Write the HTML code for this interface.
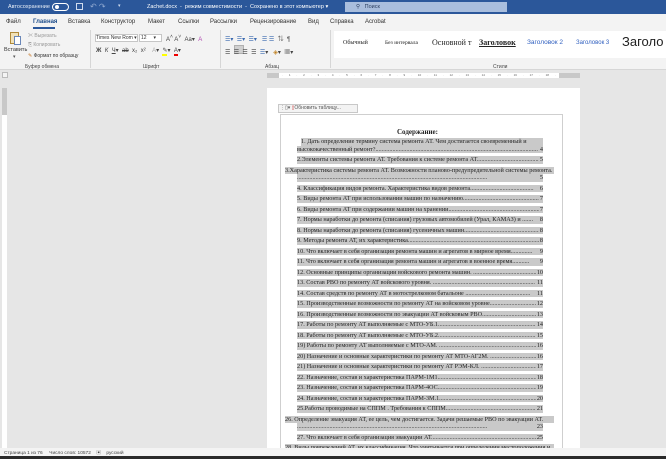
<!DOCTYPE html>
<html><head><meta charset="utf-8"><style>
*{margin:0;padding:0;box-sizing:border-box}
body{width:666px;height:459px;overflow:hidden;background:#e6e6e6;font-family:"Liberation Sans","Noto Sans CJK SC",sans-serif;position:relative}
.a{position:absolute;white-space:nowrap}
.t{font-size:6px}
.doc{font-family:"Liberation Serif",serif;font-size:6.2px;color:#222}
.ln{position:absolute;left:297px;width:246px;height:7.5px;background:#c9c9c9;line-height:7.5px;overflow:hidden;white-space:nowrap}
.ln span.n{position:absolute;right:0;top:0;background:#c9c9c9;padding-left:1px}
.w{left:285px;width:269px}
.rul{display:flex;justify-content:space-between;padding:0 3px}
</style></head><body>
<div class="a" style="left:0;top:0;width:666px;height:14px;background:#2b579a"></div>
<div class="a t" style="left:8px;top:4px;color:#e8eef7;font-size:5.5px">Автосохранение</div>
<div class="a" style="left:52px;top:3px;width:17px;height:8px;border:1px solid #fff;border-radius:4px"></div>
<div class="a" style="left:55px;top:5px;width:4px;height:4px;background:#fff;border-radius:2px"></div>
<div class="a" style="left:76px;top:3px;width:7px;height:7px;border:1px solid #cfdbee"></div>
<div class="a t" style="left:90px;top:2px;color:#8fa8d0;font-size:8px">↶ ↷</div>
<div class="a t" style="left:118px;top:3px;color:#cfdbee;font-size:5px">▾</div>
<div class="a t" style="left:147px;top:4px;color:#fff;font-size:5.5px">Zachet.docx &nbsp;-&nbsp; режим совместимости &nbsp;-&nbsp; Сохранено в этот компьютер ▾</div>
<div class="a" style="left:345px;top:2px;width:162px;height:10px;background:#a9bedd"></div>
<div class="a t" style="left:356px;top:4px;color:#2b3f60;font-size:5.5px">⚲ &nbsp; Поиск</div>
<div class="a" style="left:0;top:14px;width:666px;height:56px;background:#f3f3f3"></div>
<div class="a t" style="left:6px;top:19px;color:#333">Файл</div>
<div class="a t" style="left:33px;top:19px;color:#1e4e8c;font-weight:bold">Главная</div>
<div class="a" style="left:33px;top:27px;width:22px;height:1.5px;background:#2b579a"></div>
<div class="a t" style="left:68px;top:19px;color:#333">Вставка</div>
<div class="a t" style="left:101px;top:19px;color:#333">Конструктор</div>
<div class="a t" style="left:148px;top:19px;color:#333">Макет</div>
<div class="a t" style="left:178px;top:19px;color:#333">Ссылки</div>
<div class="a t" style="left:210px;top:19px;color:#333">Рассылки</div>
<div class="a t" style="left:250px;top:19px;color:#333">Рецензирование</div>
<div class="a t" style="left:308px;top:19px;color:#333">Вид</div>
<div class="a t" style="left:330px;top:19px;color:#333">Справка</div>
<div class="a t" style="left:365px;top:19px;color:#333">Acrobat</div>
<div class="a" style="left:10px;top:32px;width:9px;height:12px;border:1px solid #b08a3a;background:#f1e2b8"></div>
<div class="a" style="left:14px;top:36px;width:7px;height:9px;border:1px solid #6a87b8;background:#fff"></div>
<div class="a t" style="left:4px;top:47px;color:#333;font-size:5.5px">Вставить</div>
<div class="a t" style="left:13px;top:54px;color:#555;font-size:5px">▾</div>
<div class="a t" style="left:28px;top:32px;color:#999;font-size:5px">✂ Вырезать</div>
<div class="a t" style="left:28px;top:42px;color:#999;font-size:5px">⎘ Копировать</div>
<div class="a t" style="left:28px;top:53px;color:#333;font-size:5px"><span style="color:#c8731e">✎</span> Формат по образцу</div>
<div class="a t" style="left:25px;top:64px;color:#444;font-size:5px">Буфер обмена</div>
<div class="a" style="left:90px;top:30px;width:1px;height:38px;background:#d6d6d6"></div>
<div class="a" style="left:95px;top:34px;width:43px;height:8px;background:#fff;border:1px solid #c6c6c6"></div>
<div class="a t" style="left:96px;top:35px;color:#333;font-size:5px">Times New Rom ▾</div>
<div class="a" style="left:139px;top:34px;width:23px;height:8px;background:#fff;border:1px solid #c6c6c6"></div>
<div class="a t" style="left:141px;top:35px;color:#333;font-size:5px">12 &nbsp; &nbsp; ▾</div>
<div class="a t" style="left:166px;top:34px;color:#444;font-size:6px">A<sup>˄</sup> A<sup>˅</sup> &nbsp;Aa▾ &nbsp;<span style="color:#b04ab0">A</span></div>
<div class="a t" style="left:96px;top:47px;color:#444;font-size:6px"><b>Ж</b> &nbsp;<i>К</i> &nbsp;<u>Ч</u>▾ &nbsp;<s>ab</s> &nbsp;x₂ &nbsp;x² &nbsp;&nbsp; <span style="color:#aaa">A</span>▾ &nbsp;<span style="border-bottom:2px solid #ff0">✎</span>▾ &nbsp;<span style="border-bottom:2px solid #e00">A</span>▾</div>
<div class="a t" style="left:143px;top:64px;color:#444;font-size:5px">Шрифт</div>
<div class="a" style="left:220px;top:30px;width:1px;height:38px;background:#d6d6d6"></div>
<div class="a t" style="left:225px;top:34px;color:#3a6ab0;font-size:6px">☰▾ &nbsp;☰▾ &nbsp;☰▾ &nbsp; ☰ ☰ &nbsp;<span style="color:#444">⇅ &nbsp;¶</span></div>
<div class="a" style="left:234px;top:45px;width:10px;height:9px;background:#d0d0d0;border:1px solid #b0b0b0"></div>
<div class="a t" style="left:225px;top:47px;color:#444;font-size:6px">☰ &nbsp;☰ &nbsp;☰ &nbsp;☰ &nbsp;<span style="color:#3a6ab0">☰</span>▾ &nbsp; <span style="color:#c08020">◈</span>▾ &nbsp;▦▾</div>
<div class="a t" style="left:265px;top:64px;color:#444;font-size:5px">Абзац</div>
<div class="a" style="left:330px;top:30px;width:1px;height:38px;background:#d6d6d6"></div>
<div class="a" style="left:334px;top:31px;width:332px;height:27px;background:#fff"></div>
<div class="a" style="left:343px;top:40px;font-family:'Liberation Serif',serif;font-size:6px;color:#222">Обычный</div>
<div class="a" style="left:385px;top:40px;font-family:'Liberation Serif',serif;font-size:5.5px;color:#222">Без интервала</div>
<div class="a" style="left:432px;top:38px;font-family:'Liberation Serif',serif;font-size:8px;color:#222">Основной т</div>
<div class="a" style="left:479px;top:38px;font-family:'Liberation Serif',serif;font-size:8px;font-weight:bold;text-decoration:underline;color:#222">Заголовок</div>
<div class="a" style="left:527px;top:39px;font-size:6.5px;color:#2f5fbf">Заголовок 2</div>
<div class="a" style="left:576px;top:40px;font-size:6px;color:#2f5fbf">Заголовок 3</div>
<div class="a" style="left:622px;top:34px;font-size:13px;color:#222">Заголо</div>
<div class="a t" style="left:493px;top:64px;color:#444;font-size:5px">Стили</div>
<div class="a" style="left:0;top:69px;width:666px;height:1px;background:#d6d6d6"></div>
<div class="a" style="left:2px;top:72px;width:6px;height:6px;border:1px solid #bbb;background:#f4f4f4"></div>
<div class="a" style="left:267px;top:73px;width:313px;height:5px;background:#c8c8c8"></div>
<div class="a rul" style="left:279px;top:73px;width:280px;height:5px;background:#fff;font-size:3px;color:#666;line-height:5px">
<span>·</span><span>1</span><span>·</span><span>2</span><span>·</span><span>3</span><span>·</span><span>4</span><span>·</span><span>5</span><span>·</span><span>6</span><span>·</span><span>7</span><span>·</span><span>8</span><span>·</span><span>9</span><span>·</span><span>10</span><span>·</span><span>11</span><span>·</span><span>12</span><span>·</span><span>13</span><span>·</span><span>14</span><span>·</span><span>15</span><span>·</span><span>16</span><span>·</span><span>17</span><span>·</span><span>18</span><span>·</span></div>
<div class="a" style="left:2px;top:88px;width:5px;height:360px;background:#fff"></div>
<div class="a" style="left:2px;top:88px;width:5px;height:27px;background:#c8c8c8"></div>
<div class="a" style="left:267px;top:88px;width:313px;height:360px;background:#fff"></div>
<div class="a" style="left:280px;top:114px;width:283px;height:334px;border:1px solid #cfcfcf;border-bottom:none"></div>
<div class="a" style="left:278px;top:104px;width:80px;height:9px;background:#f3f3f3;border:1px solid #c8c8c8"></div>
<div class="a" style="left:280px;top:104px;font-size:5px;color:#555;line-height:9px">⋮▯▾ <span style="color:#c33">▯</span>Обновить таблицу...</div>
<div class="doc">
<div class="a" style="left:397px;top:128px;font-weight:bold;font-size:7px">Содержание:</div>
<div class="ln" style="top:138px;left:301px;width:242px"><span>1. Дать определение термину система ремонта АТ. Чем достигается своевременный и</span></div>
<div class="ln" style="top:145.5px"><span>высококачественный ремонт?.........................................................................................................</span><span class="n">4</span></div>
<div class="ln" style="top:156px"><span>2.Элементы системы ремонта АТ. Требования к системе ремонта АТ..........................................</span><span class="n">5</span></div>
<div class="ln w" style="top:166.5px"><span>3.Характеристика системы ремонта АТ. Возможности планово-предупредительной системы ремонта.</span></div>
<div class="ln" style="top:174px"><span>...........................................................................................................................</span><span class="n">5</span></div>
<div class="ln" style="top:184.5px"><span>4. Классификация видов ремонта. Характеристика видов ремонта.........................................</span><span class="n">6</span></div>
<div class="ln" style="top:195px"><span>5. Виды ремонта АТ при использовании машин по назначению...............................................................</span><span class="n">7</span></div>
<div class="ln" style="top:205.5px"><span>6. Виды ремонта АТ при содержании машин на хранении......................................................................</span><span class="n">7</span></div>
<div class="ln" style="top:216px"><span>7. Нормы наработки до ремонта (списания) грузовых автомобилей (Урал, КАМАЗ) и .......</span><span class="n">8</span></div>
<div class="ln" style="top:226.5px"><span>8. Нормы наработки до ремонта (списания) гусеничных машин.........................................................</span><span class="n">8</span></div>
<div class="ln" style="top:237px"><span>9. Методы ремонта АТ, их характеристика......................................................................................</span><span class="n">8</span></div>
<div class="ln" style="top:247.5px"><span>10. Что включает в себя организация ремонта машин и агрегатов в мирное время..............</span><span class="n">9</span></div>
<div class="ln" style="top:258px"><span>11. Что включает в себя организация ремонта машин и агрегатов в военное время...........</span><span class="n">9</span></div>
<div class="ln" style="top:268.5px"><span>12. Основные принципы организации войскового ремонта машин. ...............................................</span><span class="n">10</span></div>
<div class="ln" style="top:279px"><span>13. Состав РВО по ремонту АТ войскового уровня. ..................................................................</span><span class="n">11</span></div>
<div class="ln" style="top:289.5px"><span>14. Состав средств по ремонту АТ в мотострелковом батальоне ..........................................</span><span class="n">11</span></div>
<div class="ln" style="top:300px"><span>15. Производственные возможности по ремонту АТ на войсковом уровне..................................</span><span class="n">12</span></div>
<div class="ln" style="top:310.5px"><span>16. Производственные возможности по эвакуации АТ войсковым РВО...........................................</span><span class="n">13</span></div>
<div class="ln" style="top:321px"><span>17. Работы по ремонту АТ выполняемые с МТО-УБ.1.......................................................................</span><span class="n">14</span></div>
<div class="ln" style="top:331.5px"><span>18. Работы по ремонту АТ выполняемые с МТО-УБ.2.......................................................................</span><span class="n">15</span></div>
<div class="ln" style="top:342px"><span>19) Работы по ремонту АТ выполняемые с МТО-АМ. ......................................................................</span><span class="n">16</span></div>
<div class="ln" style="top:352.5px"><span>20) Назначение и основные характеристики по ремонту АТ МТО-АГ2М. ..............................</span><span class="n">16</span></div>
<div class="ln" style="top:363px"><span>21) Назначение и основные характеристики по ремонту АТ РЭМ-КЛ. ...........................................</span><span class="n">17</span></div>
<div class="ln" style="top:373.5px"><span>22. Назначение, состав и характеристика ПАРМ-1М1........................................................................</span><span class="n">18</span></div>
<div class="ln" style="top:384px"><span>23. Назначение, состав и характеристика ПАРМ-4ОС.......................................................................</span><span class="n">19</span></div>
<div class="ln" style="top:394.5px"><span>24. Назначение, состав и характеристика ПАРМ-3М.1.....................................................................</span><span class="n">20</span></div>
<div class="ln" style="top:405px"><span>25.Работы проводимые на СППМ . Требования к СППМ..............................................................</span><span class="n">21</span></div>
<div class="ln w" style="top:415.5px"><span>26. Определение эвакуация АТ, ее цель, чем достигается. Задачи решаемые РВО по эвакуации АТ.</span></div>
<div class="ln" style="top:423px"><span>...........................................................................................................................</span><span class="n">23</span></div>
<div class="ln" style="top:433.5px"><span>27. Что включает в себя организация эвакуации АТ...........................................................................</span><span class="n">25</span></div>
<div class="ln w" style="top:444px"><span>28. Виды повреждений АТ, их классификация. Что учитывается при определении местоположения и</span></div>
</div>
<div class="a" style="left:0;top:448px;width:666px;height:8px;background:#f3f3f3"></div>
<div class="a" style="left:4px;top:449px;font-size:4.8px;color:#444">Страница 1 из 76 &nbsp; &nbsp; Число слов: 10572 &nbsp; &nbsp;▣ &nbsp; &nbsp;русский</div>
<div class="a" style="left:0;top:456px;width:666px;height:3px;background:#2a2a2a"></div>
</body></html>
